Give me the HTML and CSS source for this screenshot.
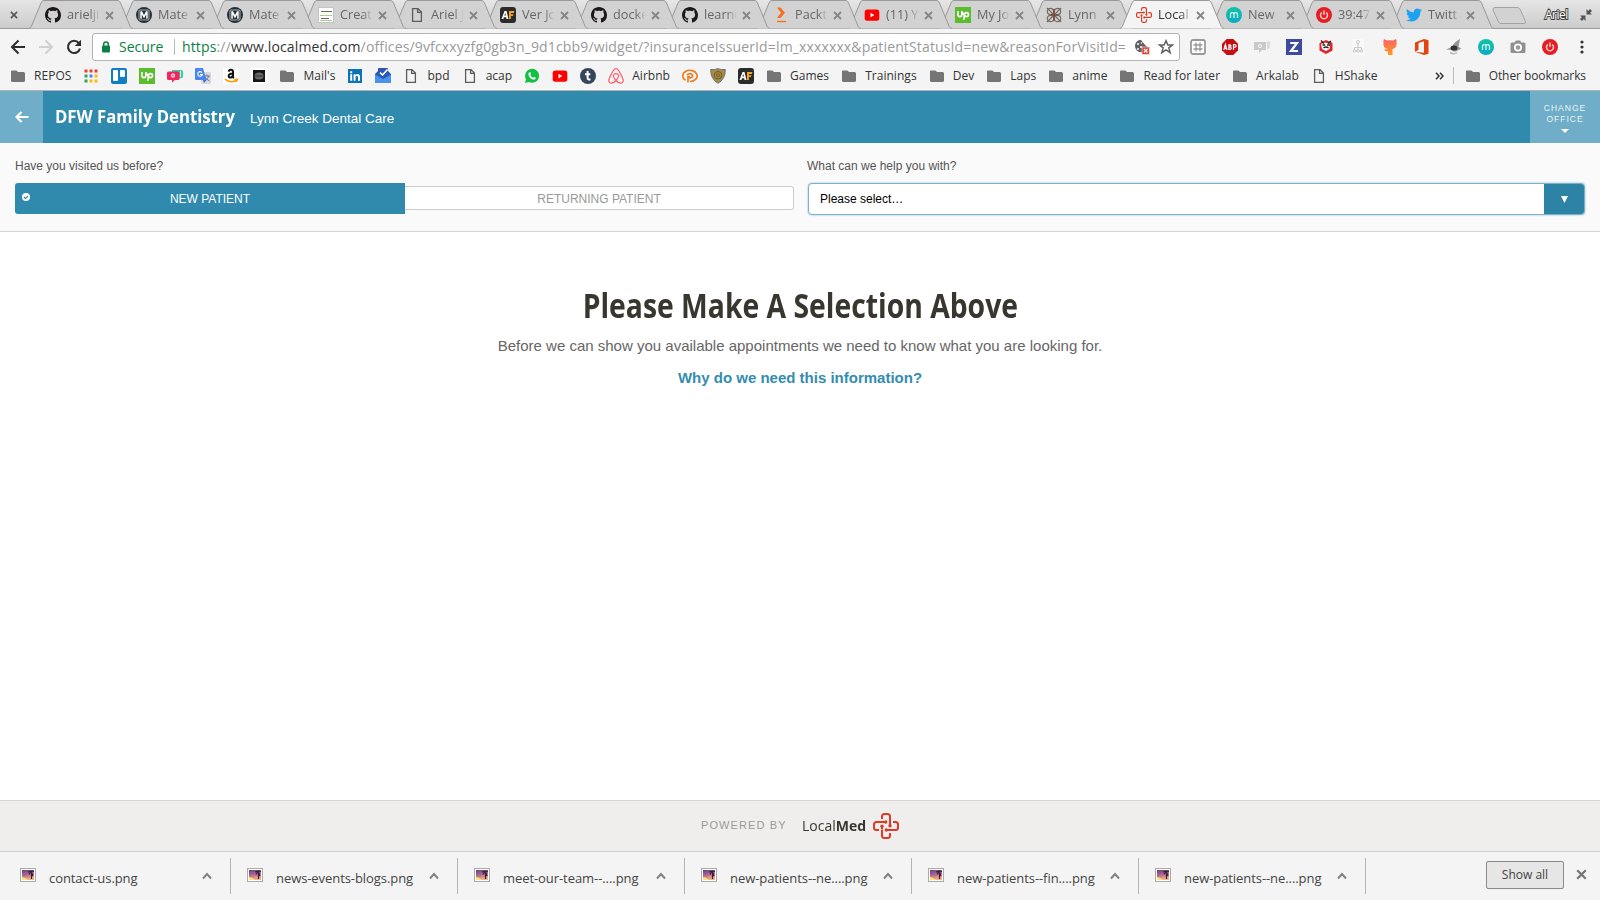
FILE: index.html
```html
<!DOCTYPE html>
<html lang="en">
<head>
<meta charset="utf-8">
<title>LocalMed</title>
<link rel="stylesheet" href="styles.css">
</head>
<body>
<svg class="defs" width="0" height="0">
  <defs>
    <linearGradient id="sunset" x1="0" y1="0" x2="0.3" y2="1"><stop offset="0" stop-color="#62407d"/><stop offset=".55" stop-color="#b06a94"/><stop offset="1" stop-color="#f3b183"/></linearGradient>
    <linearGradient id="teal" x1="0" y1="0" x2="0" y2="1"><stop offset="0" stop-color="#12c4a4"/><stop offset="1" stop-color="#0fa8c8"/></linearGradient>
    <linearGradient id="warm" x1="0" y1="0" x2="0" y2="1"><stop offset="0" stop-color="#f9646a"/><stop offset="1" stop-color="#fc9a1c"/></linearGradient>
  </defs>
  <symbol id="tab" viewBox="0 0 104 29"><path d="M0 28.5C1.500 28 2 27 2.500 26L12 3C13 1 13.500.5 15 .5H88C90 .5 90.500 1 91.500 3L101 26C101.500 27 102 28 104 28.500"/></symbol>
  <symbol id="x" viewBox="0 0 9 9"><path d="M1 1L8 8M8 1L1 8" stroke="currentColor" stroke-width="1.800" fill="none"/></symbol>
  <symbol id="github" viewBox="0 0 16 16"><path fill="#1b1817" d="M8 0C3.580 0 0 3.580 0 8c0 3.540 2.290 6.530 5.470 7.590.4.070.55-.17.55-.38 0-.19-.01-.82-.01-1.490-2.010.37-2.530-.49-2.690-.94-.09-.23-.48-.94-.82-1.130-.28-.15-.68-.52-.01-.53.63-.01 1.080.58 1.230.82.72 1.210 1.870.87 2.330.66.070-.52.28-.87.51-1.070-1.780-.2-3.640-.89-3.640-3.950 0-.87.31-1.590.82-2.150-.08-.2-.36-1.020.080-2.120 0 0 .67-.21 2.200.82.64-.18 1.320-.27 2-.27s1.360.090 2 .27c1.530-1.040 2.200-.82 2.200-.82.44 1.100.16 1.920.080 2.120.51.56.82 1.270.82 2.150 0 3.070-1.870 3.750-3.650 3.950.29.25.54.73.54 1.480 0 1.070-.01 1.930-.01 2.200 0 .21.15.46.55.38A8.010 8.010 0 0 0 16 8c0-4.420-3.580-8-8-8z"/></symbol>
  <symbol id="mate" viewBox="0 0 16 16"><circle cx="8" cy="8" r="8" fill="#232e37"/><rect x="3" y="3" width="10" height="10" rx="1" fill="none" stroke="#aab0b5" stroke-width="1"/><path d="M4.300 4.300H6L8 8L10 4.300H11.700V11.700H10.200V7.500L8 11.500L5.800 7.500V11.700H4.300Z" fill="#fff"/></symbol>
  <symbol id="lines" viewBox="0 0 16 16"><rect x=".5" y=".5" width="15" height="15" fill="#fff" stroke="#c4c4c4"/><path d="M3 4.500H14M3 11.500H11" stroke="#666" stroke-width="1"/><path d="M2 8.500H14M2 13.500H14" stroke="#a9cf8c"/></symbol>
  <symbol id="page" viewBox="0 0 16 16"><path d="M3.600 1.600H9L12.400 5V14.400H3.600ZM8.600 1.600V5.400H12.400" fill="none" stroke="#5c5c5c" stroke-width="1.300"/></symbol>
  <symbol id="af" viewBox="0 0 16 16"><rect width="16" height="16" rx="3" fill="#2b2b2b"/><path d="M1.500 12L4.500 4H6.500L8.500 12H6.600L6.200 10.300H3.900L3.400 12ZM4.400 8.600H5.900L5.300 6Z" fill="#fff"/><path d="M9 12V4H14.500L13.800 6H11L10.900 7.300H13.500L12.900 9H10.900V12Z" fill="#f7a41d"/></symbol>
  <symbol id="packt" viewBox="0 0 16 16"><path d="M4 .5H7.500L12 5.700L7.500 11H4L8 5.700Z" fill="#f37021"/><path d="M4 14.500H13" stroke="#f37021" stroke-width="1.400"/></symbol>
  <symbol id="yt" viewBox="0 0 16 16"><rect x=".7" y="2.500" width="14.600" height="11.200" rx="2.500" fill="#f00"/><path d="M6.500 5.700L10.300 8.100L6.500 10.500Z" fill="#fff"/></symbol>
  <symbol id="up" viewBox="0 0 16 16"><rect width="16" height="16" fill="#5bbc2e"/><path d="M3 4V7.700A1.900 1.900 0 0 0 6.800 7.700V4M8.700 12.800L9.500 7.500A2 2 0 1 1 11.400 9.600Q10 9.600 7 5" fill="none" stroke="#fff" stroke-width="1.600"/></symbol>
  <symbol id="knot" viewBox="0 0 16 16"><g fill="none" stroke="#756a63" stroke-width="1.200"><circle cx="4.500" cy="4.500" r="3.200"/><circle cx="11.500" cy="4.500" r="3.200"/><circle cx="4.500" cy="11.500" r="3.200"/><circle cx="11.500" cy="11.500" r="3.200"/><path d="M1 1L15 15M15 1L1 15"/></g><path d="M8 2V14M5 8H11" stroke="#7d4a3d" stroke-width="1.500"/></symbol>
  <symbol id="cross" viewBox="0 0 26 26"><g fill="none" stroke="#d93d27" stroke-width="2"><path d="M9 13V16.500M9 17V22.500Q9 25 11.500 25H14.500Q17 25 17 22.500V20"/><path d="M13 17H22.500Q25 17 25 14.500V11.500Q25 9 22.500 9H20"/><path d="M17 13V3.500Q17 1 14.500 1H11.500Q9 1 9 3.500V6"/><path d="M13 9H3.500Q1 9 1 11.500V14.500Q1 17 3.500 17H6"/></g><g fill="#d93d27"><circle cx="9" cy="13.300" r="1.700"/><circle cx="13.300" cy="17" r="1.700"/><circle cx="17" cy="12.700" r="1.700"/><circle cx="12.700" cy="9" r="1.700"/></g></symbol>
  <symbol id="m" viewBox="0 0 16 16"><circle cx="8" cy="8" r="8" fill="url(#teal)"/><path d="M4.500 11V7.300A1.750 1.750 0 0 1 8 7.300V11M8 7.300A1.750 1.750 0 0 1 11.500 7.300V11" fill="none" stroke="#d9fff5" stroke-width="1.200"/></symbol>
  <symbol id="power" viewBox="0 0 16 16"><circle cx="8" cy="8" r="8" fill="#e51e25"/><path d="M5.800 5.500A3.500 3.500 0 1 0 10.200 5.500M8 3.500V8" fill="none" stroke="#fbd5d5" stroke-width="1.400"/></symbol>
  <symbol id="bird" viewBox="0 0 24 24"><path fill="#1da1f2" d="M23.950 4.570a10 10 0 0 1-2.820.77 4.960 4.960 0 0 0 2.160-2.720c-.95.550-2 .95-3.130 1.180a4.920 4.920 0 0 0-8.380 4.480C7.690 8.090 4.070 6.130 1.640 3.160a4.820 4.820 0 0 0-.67 2.480c0 1.710.87 3.210 2.190 4.100a4.900 4.900 0 0 1-2.230-.62v.060a4.920 4.920 0 0 0 3.950 4.830 5 5 0 0 1-2.210.080 4.940 4.940 0 0 0 4.600 3.420A9.870 9.870 0 0 1 0 19.540a14 14 0 0 0 7.550 2.210c9.050 0 14-7.500 14-13.980 0-.21 0-.42-.02-.63a9.940 9.940 0 0 0 2.460-2.550z"/></symbol>
  <symbol id="folder" viewBox="0 0 16 16"><path fill="#757575" d="M2 2.500H6.500L8 4H13.500Q15 4 15 5.500V12.500Q15 14 13.500 14H2.500Q1 14 1 12.500V3.500Q1 2.500 2 2.500Z"/></symbol>
  <symbol id="apps" viewBox="0 0 16 16"><path d="M1.500 3H14.500" stroke="#ea4335" stroke-width="3" stroke-dasharray="3 2"/><path d="M1.500 8H4.500" stroke="#34a05a" stroke-width="3"/><path d="M6.500 8H9.500" stroke="#4285f4" stroke-width="3"/><path d="M11.500 8H14.500" stroke="#fbbc05" stroke-width="3"/><path d="M1.500 13H4.500" stroke="#34a05a" stroke-width="3"/><path d="M6.500 13H14.500" stroke="#fbbc05" stroke-width="3" stroke-dasharray="3 2"/></symbol>
  <symbol id="trello" viewBox="0 0 16 16"><rect width="16" height="16" rx="2" fill="#0f7ec4"/><rect x="2" y="2" width="5" height="11" rx="1" fill="#fff"/><rect x="9" y="2" width="5" height="7" rx="1" fill="#fff"/></symbol>
  <symbol id="chat" viewBox="0 0 16 16"><path d="M5 2H14.500Q16 2 16 3.500V9.500L13 10.500H5Z" fill="#3fd0a0"/><rect x="13" y="3" width="1" height="6" fill="#fff" opacity=".7"/><path d="M1.500 3.500H11Q12.500 3.500 12.500 5V10.500Q12.500 12 11 12H8L5 14.500V12H1.500Q0 12 0 10.500V5Q0 3.500 1.500 3.500Z" fill="#f5245f"/><circle cx="6" cy="7.600" r="1.500" fill="none" stroke="#fff" stroke-width="1.100"/></symbol>
  <symbol id="translate" viewBox="0 0 16 16"><rect x="6" y="4" width="10" height="12" rx="1" fill="#d7d9dc"/><path d="M9 8H15M12 6.500V8M14 8Q13 11 9.500 13M10 9Q12 12 14.500 13" stroke="#6b7f94" fill="none"/><path d="M1 0H8L11.500 12H1Q0 12 0 11V1Q0 0 1 0Z" fill="#4a86ee"/><path d="M7 4.700A2.300 2.300 0 1 0 7.300 6.500H5" fill="none" stroke="#fff" stroke-width="1.100"/><path d="M8 12H11.500L9 15Z" fill="#3767d6"/></symbol>
  <symbol id="amazon" viewBox="0 0 16 16"><rect width="16" height="16" fill="#fff"/><path d="M5.500 3.600Q6.200 1.700 8 1.800Q10 1.900 10 4V8.500Q10 9.500 11 10M10 5.500Q5.600 5.400 5.700 8Q6 10 8 9.500Q9.800 8.800 10 6.500" fill="none" stroke="#111" stroke-width="2"/><path d="M1.800 11.200Q7.500 15.500 13 12.500M11.500 11.500L14.300 11.300L13.300 14" fill="none" stroke="#f90" stroke-width="1.500"/></symbol>
  <symbol id="dark" viewBox="0 0 16 16"><rect width="16" height="16" fill="#fdfdfd"/><rect x="2" y="2" width="12" height="12" fill="#151515"/><ellipse cx="8" cy="8" rx="4.500" ry="3.500" fill="#666"/><path d="M4 8H12" stroke="#333" stroke-width="1"/></symbol>
  <symbol id="linkedin" viewBox="0 0 16 16"><rect x="1" y="1" width="14" height="14" fill="#0b74b4"/><path d="M3.200 6.200H5.200V12.800H3.200ZM3.200 3.200H5.200V5.200H3.200ZM6.600 6.200H8.500V7.100Q10 5.600 11.800 6.300Q13 7 13 9V12.800H11V9.300Q11 7.800 9.900 7.800Q8.600 7.800 8.600 9.300V12.800H6.600Z" fill="#fff"/></symbol>
  <symbol id="inbox" viewBox="0 0 16 16"><path d="M0 6L3 3V1Q3 0 4 0H12Q13 0 13 1V3L16 6V14Q16 15 15 15H1Q0 15 0 14Z" fill="#2a56b5"/><path d="M5 4.500L7.500 7L12.500 1.500" fill="none" stroke="#fff" stroke-width="1.700"/><path d="M0 6.500L8 11L16 6.500V14Q16 15 15 15H1Q0 15 0 14Z" fill="#4b92ef"/></symbol>
  <symbol id="whatsapp" viewBox="0 0 16 16"><path d="M1 15L2 11.300A7 7 0 1 1 4.800 14Z" fill="#12c143"/><path d="M5 4.500L6.300 4.300L7 6.200L6.300 7Q7.200 9 9.200 9.700L10 8.900L11.800 9.800Q11.700 11.500 10 11.700Q6 11.500 4.500 7Q4.200 5.500 5 4.500Z" fill="#fff"/></symbol>
  <symbol id="tumblr" viewBox="0 0 16 16"><circle cx="8" cy="8" r="8" fill="#35465c"/><path d="M7.600 3V10.200Q7.700 12 10.500 11.300M5 6.200H10.300" fill="none" stroke="#fff" stroke-width="2"/></symbol>
  <symbol id="airbnb" viewBox="0 0 16 16"><path d="M8 12.500Q5 9 5.500 7.500Q6 5.700 8 5.700Q10 5.700 10.500 7.500Q11 9 8 12.500Q5 15.800 2.500 15Q.2 14 .9 11.500Q2.500 7 5.700 2Q6.500.6 8 .6Q9.500.6 10.300 2Q13.500 7 15.100 11.500Q15.800 14 13.500 15Q11 15.800 8 12.500Z" fill="none" stroke="#ff5a6a" stroke-width="1.200"/></symbol>
  <symbol id="orangep" viewBox="0 0 16 16"><path d="M3.500 12.300A7.200 5.600 0 1 1 8 13.500M6 14.500V8M5 7Q8 4.500 10 6.500Q11.500 9 8.500 10Q7 10 7.500 8" fill="none" stroke="#f07d20" stroke-width="1.700"/></symbol>
  <symbol id="shield" viewBox="0 0 16 16"><path d="M.7 1.500Q4.500 2 8 .7Q11.500 2 15.300 1.500Q15.500 11 8 15.300Q.5 11 .7 1.500Z" fill="#b08a3c" stroke="#61737c"/><circle cx="8" cy="7.300" r="3.800" fill="none" stroke="#665a36"/><circle cx="8" cy="7.300" r="1.500" fill="none" stroke="#665a36"/></symbol>
  <symbol id="hash" viewBox="0 0 16 16"><rect x="1" y="1" width="14" height="14" rx="2" fill="#fff" stroke="#999" stroke-width="1.800"/><path d="M6 3.500V12.500M10 3.500V12.500M3.500 6H12.500M3.500 10H12.500" stroke="#999" stroke-width="1.300"/></symbol>
  <symbol id="abp" viewBox="0 0 16 16"><path d="M4.700 0H11.300L16 4.700V11.300L11.300 16H4.700L0 11.300V4.700Z" fill="#c70d12"/><path d="M1.800 11L3.400 5.500L5 11M2.300 9.300H4.500M6.900 5.500V10.400H8Q9.400 10.200 9.200 9Q9 8 7 8Q9 8 8.900 6.700Q8.700 5.500 6.900 5.700M11.500 11V5.700H12.700Q14.300 6 14.200 7.200Q14 8.500 11.500 8.500" fill="none" stroke="#fff" stroke-width="1.200"/></symbol>
  <symbol id="greychat" viewBox="0 0 16 16"><path d="M13 2.500H16V9L13 10" fill="#dcdcdc"/><path d="M0 3H12V11H8L5 14V11H0Z" fill="#c9c9c9"/><circle cx="6" cy="7" r="1.500" fill="none" stroke="#f4f4f4" stroke-width="1.100"/></symbol>
  <symbol id="z" viewBox="0 0 16 16"><rect width="16" height="16" fill="#3d4a9e"/><path d="M4.200 4H11L5 12H12" fill="none" stroke="#fff" stroke-width="2.200"/></symbol>
  <symbol id="redface" viewBox="0 0 16 16"><path d="M8 1L14.500 4V11.500L8 15L1.500 11.500V4Z" fill="#df252b"/><path d="M3 5L7 3.500L12 5L11.500 10L8 12L4 10Z" fill="#fff"/><path d="M3 1.500L6 4.500M13 2L10 4.500M4.500 6H7.300M9 6H12M5.500 9Q8 7 10.500 9" stroke="#222" stroke-width="1.400" fill="none"/></symbol>
  <symbol id="tree" viewBox="0 0 16 16"><rect x="2.500" width="11.500" height="16" fill="#fafafa"/><path d="M8 4.500V12M4.500 11.500V8.500H11.500V11.500" fill="none" stroke="#ccc"/><g fill="none" stroke="#c9c9c9"><circle cx="8" cy="3" r="1.500"/><circle cx="4.500" cy="12" r="1.300"/><circle cx="8" cy="12" r="1.300"/><circle cx="11.500" cy="12" r="1.300"/></g></symbol>
  <symbol id="octocat" viewBox="0 0 16 16"><path d="M2 0L5 1.500Q8 .8 11 1.500L14 0Q15 2 14.500 4Q15.300 9 10.500 10V16H6V12.500Q3 13 2 10.500Q3.500 10 5.700 10Q.7 9 1.500 4Q1 2 2 0Z" fill="url(#warm)"/></symbol>
  <symbol id="office" viewBox="0 0 16 16"><path d="M1 3.500L10 0L14.500 1.200V14.800L10 16L1 12.800L10 13.700V2.300L4.500 4V11L1 12.800Z" fill="#e2430f"/></symbol>
  <symbol id="gull" viewBox="0 0 16 16"><path d="M14 0Q8 3 6 8L0 10.500L5.500 11Q8 14 12.500 11L15.500 9.500L12.500 8Z" fill="#969696"/><ellipse cx="8" cy="9" rx="3.500" ry="2.500" fill="#333"/><path d="M4 13.500Q8 16 11 13.500" stroke="#bbb" stroke-width="1.500" fill="none"/></symbol>
  <symbol id="camera" viewBox="0 0 16 16"><path d="M2 3.500H4.500L6 1.500H10L11.500 3.500H14Q15.500 3.500 15.500 5V12.500Q15.500 14 14 14H2Q.5 14 .5 12.500V5Q.5 3.500 2 3.500Z" fill="#8f8f8f"/><circle cx="8" cy="8.500" r="3.200" fill="#999" stroke="#fff" stroke-width="1.700"/></symbol>
  <symbol id="picture" viewBox="0 0 16 14"><rect x=".5" y=".5" width="15" height="13" fill="#fff" stroke="#aaa"/><rect x="2" y="2" width="12" height="10" fill="url(#sunset)"/><path d="M2 9Q5 9 8 12H2Z" fill="#ffe27a"/><path d="M8 4L11 3L14 3.500M11 3L9 6.500M11 3L13 8M11.500 3V11" stroke="#35203c" stroke-width="1.200" fill="none"/></symbol>
  <symbol id="chev" viewBox="0 0 10 8"><path d="M1 6.500L5 2L9 6.500" fill="none" stroke="#808080" stroke-width="1.900"/></symbol>
</svg>

<header class="browser">
  <nav class="tabs">
    <span class="sliver"><svg class="close"><use href="#x"/></svg></span>
    <div class="tab"><svg class="shape"><use href="#tab"/></svg><svg class="ico"><use href="#github"/></svg><span>arielji</span><svg class="close"><use href="#x"/></svg></div>
    <div class="tab"><svg class="shape"><use href="#tab"/></svg><svg class="ico"><use href="#mate"/></svg><span>Mate</span><svg class="close"><use href="#x"/></svg></div>
    <div class="tab"><svg class="shape"><use href="#tab"/></svg><svg class="ico"><use href="#mate"/></svg><span>Mate</span><svg class="close"><use href="#x"/></svg></div>
    <div class="tab"><svg class="shape"><use href="#tab"/></svg><svg class="ico"><use href="#lines"/></svg><span>Creat</span><svg class="close"><use href="#x"/></svg></div>
    <div class="tab"><svg class="shape"><use href="#tab"/></svg><svg class="ico"><use href="#page"/></svg><span>Ariel J</span><svg class="close"><use href="#x"/></svg></div>
    <div class="tab"><svg class="shape"><use href="#tab"/></svg><svg class="ico"><use href="#af"/></svg><span>Ver Jo</span><svg class="close"><use href="#x"/></svg></div>
    <div class="tab"><svg class="shape"><use href="#tab"/></svg><svg class="ico"><use href="#github"/></svg><span>docke</span><svg class="close"><use href="#x"/></svg></div>
    <div class="tab"><svg class="shape"><use href="#tab"/></svg><svg class="ico"><use href="#github"/></svg><span>learni</span><svg class="close"><use href="#x"/></svg></div>
    <div class="tab"><svg class="shape"><use href="#tab"/></svg><svg class="ico"><use href="#packt"/></svg><span>Packt</span><svg class="close"><use href="#x"/></svg></div>
    <div class="tab"><svg class="shape"><use href="#tab"/></svg><svg class="ico"><use href="#yt"/></svg><span>(11) Y</span><svg class="close"><use href="#x"/></svg></div>
    <div class="tab"><svg class="shape"><use href="#tab"/></svg><svg class="ico"><use href="#up"/></svg><span>My Jo</span><svg class="close"><use href="#x"/></svg></div>
    <div class="tab narrow"><svg class="shape"><use href="#tab"/></svg><svg class="ico"><use href="#knot"/></svg><span>Lynn</span><svg class="close"><use href="#x"/></svg></div>
    <div class="tab narrow active"><svg class="shape"><use href="#tab"/></svg><svg class="ico"><use href="#cross"/></svg><span>Local</span><svg class="close"><use href="#x"/></svg></div>
    <div class="tab narrow"><svg class="shape"><use href="#tab"/></svg><svg class="ico"><use href="#m"/></svg><span>New</span><svg class="close"><use href="#x"/></svg></div>
    <div class="tab narrow"><svg class="shape"><use href="#tab"/></svg><svg class="ico"><use href="#power"/></svg><span>39:47</span><svg class="close"><use href="#x"/></svg></div>
    <div class="tab narrow"><svg class="shape"><use href="#tab"/></svg><svg class="ico"><use href="#bird"/></svg><span>Twitt</span><svg class="close"><use href="#x"/></svg></div>
    <svg class="newtab" viewBox="0 0 35 17"><path d="M3 .5H25Q27 .5 28 2L33.500 14.500Q34 16.500 32 16.500H9Q7.500 16.500 6.500 15L1 3Q.5.5 3 .5Z" fill="#d2d2d2" stroke="#a3a3a3"/></svg>
    <span class="profile">Ariel</span>
    <svg class="restore" viewBox="0 0 12 12"><path d="M6.500 0L8.200 1.900L10 0L12 2L10.100 3.800L12 5.500H6.500ZM5.500 12L3.800 10.100L2 12L0 10L1.900 8.200L0 6.500H5.500Z" fill="#555"/></svg>
  </nav>

  <div class="toolbar">
    <svg class="nav back" viewBox="0 0 16 16"><path d="M8.500 1.500L2 8L8.500 14.500M2 8H15" fill="none" stroke="#2d2d2d" stroke-width="2"/></svg>
    <svg class="nav" viewBox="0 0 16 16"><path d="M7.500 1.500L14 8L7.500 14.500M14 8H1" fill="none" stroke="#d0d0d0" stroke-width="2"/></svg>
    <svg class="nav" viewBox="0 0 16 16"><path d="M12.800 4A6.100 6.100 0 1 0 14 9.500" fill="none" stroke="#2d2d2d" stroke-width="2.100"/><path d="M15 .8V7H8.800Z" fill="#2d2d2d"/></svg>
    <div class="omnibox">
      <svg class="lock" viewBox="0 0 10 12"><path d="M2.700 5V3.200A2.300 2.300 0 0 1 7.300 3.200V5" fill="none" stroke="#0b8043" stroke-width="1.500"/><rect x="1" y="4.500" width="8" height="7" rx="1" fill="#0b8043"/></svg>
      <span class="secure">Secure</span>
      <span class="url"><i class="scheme">https</i>://<b>www.localmed.com</b>/offices/9vfcxxyzfg0gb3n_9d1cbb9/widget/?insuranceIssuerId=lm_xxxxxxx&amp;patientStatusId=new&amp;reasonForVisitId=</span>
      <svg class="cookie" viewBox="0 0 16 16"><path d="M7 .7A6.300 6.300 0 1 0 13.500 8L11.500 6.500L10 4.500L8.500 3Z" fill="#616161"/><g fill="#fff"><circle cx="4" cy="5" r="1"/><circle cx="7" cy="8" r="1"/><circle cx="4" cy="10" r="1"/><circle cx="7.500" cy="4" r=".8"/></g><rect x="8" y="8" width="7.500" height="7.500" fill="#db4437" stroke="#fff" stroke-width=".5"/><path d="M10 10L13.500 13.500M13.500 10L10 13.500" stroke="#fff" stroke-width="1.100"/></svg>
      <svg class="star" viewBox="0 0 16 16"><path d="M8 1.700L9.900 6H14.500L10.800 8.900L12.200 13.600L8 10.800L3.800 13.600L5.200 8.900L1.500 6H6.100Z" fill="none" stroke="#5f5f5f" stroke-width="1.500"/></svg>
    </div>
    <div class="exts">
      <svg><use href="#hash"/></svg><svg><use href="#abp"/></svg><svg><use href="#greychat"/></svg><svg><use href="#z"/></svg><svg><use href="#redface"/></svg><svg><use href="#tree"/></svg><svg><use href="#octocat"/></svg><svg><use href="#office"/></svg><svg><use href="#gull"/></svg><svg><use href="#m"/></svg><svg><use href="#camera"/></svg><svg><use href="#power"/></svg><svg viewBox="0 0 16 16"><g fill="#333"><circle cx="8" cy="3" r="1.600"/><circle cx="8" cy="8" r="1.600"/><circle cx="8" cy="13" r="1.600"/></g></svg>
    </div>
  </div>

  <div class="bookmarks">
    <a><svg><use href="#folder"/></svg>REPOS</a>
    <a><svg><use href="#apps"/></svg></a>
    <a><svg><use href="#trello"/></svg></a>
    <a><svg><use href="#up"/></svg></a>
    <a><svg><use href="#chat"/></svg></a>
    <a><svg><use href="#translate"/></svg></a>
    <a><svg><use href="#amazon"/></svg></a>
    <a><svg><use href="#dark"/></svg></a>
    <a><svg><use href="#folder"/></svg>Mail's</a>
    <a><svg><use href="#linkedin"/></svg></a>
    <a><svg><use href="#inbox"/></svg></a>
    <a><svg><use href="#page"/></svg>bpd</a>
    <a><svg><use href="#page"/></svg>acap</a>
    <a><svg><use href="#whatsapp"/></svg></a>
    <a><svg><use href="#yt"/></svg></a>
    <a><svg><use href="#tumblr"/></svg></a>
    <a><svg><use href="#airbnb"/></svg>Airbnb</a>
    <a><svg><use href="#orangep"/></svg></a>
    <a><svg><use href="#shield"/></svg></a>
    <a><svg><use href="#af"/></svg></a>
    <a><svg><use href="#folder"/></svg>Games</a>
    <a><svg><use href="#folder"/></svg>Trainings</a>
    <a><svg><use href="#folder"/></svg>Dev</a>
    <a><svg><use href="#folder"/></svg>Laps</a>
    <a><svg><use href="#folder"/></svg>anime</a>
    <a><svg><use href="#folder"/></svg>Read for later</a>
    <a><svg><use href="#folder"/></svg>Arkalab</a>
    <a><svg><use href="#page"/></svg>HShake</a>
    <svg class="more" viewBox="0 0 9 8"><path d="M1 .8L4 4L1 7.200M5 .8L8 4L5 7.200" fill="none" stroke="#333" stroke-width="1.500"/></svg>
    <a class="other"><svg><use href="#folder"/></svg>Other bookmarks</a>
  </div>
</header>

<div class="office-bar">
  <button class="goback"><svg viewBox="0 0 14 12"><path d="M6.500 1L1.500 6L6.500 11M1.500 6H13.500" fill="none" stroke="#fff" stroke-width="2.200"/></svg></button>
  <h1><span>DFW Family Dentistry</span></h1>
  <p>Lynn Creek Dental Care</p>
  <button class="change"><span>CHANGE</span><span>OFFICE</span><i></i></button>
</div>

<section class="filters">
  <div class="field">
    <label>Have you visited us before?</label>
    <div class="toggle">
      <div class="new"><svg viewBox="0 0 8 8"><circle cx="4" cy="4" r="4" fill="#fff"/><path d="M2 4L3.500 5.500L6 2.800" fill="none" stroke="#2f8aad" stroke-width="1.200"/></svg>NEW PATIENT</div>
      <div class="returning">RETURNING PATIENT</div>
    </div>
  </div>
  <div class="field">
    <label>What can we help you with?</label>
    <div class="select"><span>Please select…</span><em><svg viewBox="0 0 7 7"><path d="M0 0H7L3.500 7Z" fill="#fff"/></svg></em></div>
  </div>
</section>

<main>
  <h2><span>Please Make A Selection Above</span></h2>
  <p>Before we can show you available appointments we need to know what you are looking for.</p>
  <a>Why do we need this information?</a>
</main>

<footer class="powered">
  <span class="by">POWERED BY</span>
  <span class="brand"><span>Local<b>Med</b></span></span>
  <svg><use href="#cross"/></svg>
</footer>

<footer class="downloads">
  <div class="file"><svg class="pic"><use href="#picture"/></svg><span>contact-us.png</span><svg class="chev"><use href="#chev"/></svg></div>
  <div class="file"><svg class="pic"><use href="#picture"/></svg><span>news-events-blogs.png</span><svg class="chev"><use href="#chev"/></svg></div>
  <div class="file"><svg class="pic"><use href="#picture"/></svg><span>meet-our-team--....png</span><svg class="chev"><use href="#chev"/></svg></div>
  <div class="file"><svg class="pic"><use href="#picture"/></svg><span>new-patients--ne....png</span><svg class="chev"><use href="#chev"/></svg></div>
  <div class="file"><svg class="pic"><use href="#picture"/></svg><span>new-patients--fin....png</span><svg class="chev"><use href="#chev"/></svg></div>
  <div class="file"><svg class="pic"><use href="#picture"/></svg><span>new-patients--ne....png</span><svg class="chev"><use href="#chev"/></svg></div>
  <button class="showall">Show all</button>
  <svg class="shut"><use href="#x"/></svg>
</footer>
</body>
</html>
```
FILE: styles.css
```css
* { box-sizing: border-box; }
body {
  margin: 0;
  width: 1600px;
  height: 900px;
  overflow: hidden;
  display: flex;
  flex-direction: column;
  background: #fff;
  font-family: "Liberation Sans", Arial, sans-serif;
}
svg { display: block; flex: none; }
.defs { position: absolute; }
button { border: 0; padding: 0; margin: 0; font: inherit; }
i, em { font-style: normal; }

/* browser chrome */
.browser {
  height: 91px;
  flex: none;
  background: #f4f4f4;
  border-bottom: 1px solid #b3b3b3;
  font-family: "Open Sans", "Noto Sans", sans-serif;
}
.tabs {
  height: 29px;
  display: flex;
  align-items: center;
  background: linear-gradient(#e6e6e6, #cbcbcb);
  box-shadow: inset 0 -1px #9a9a9a;
  isolation: isolate;
}
.sliver { width: 29px; padding-left: 10px; flex: none; }
.close { width: 9px; height: 9px; color: #858585; }
.sliver .close { width: 8px; height: 8px; color: #555; }
.tab {
  position: relative;
  width: 104px;
  height: 29px;
  margin-right: -13px;
  padding-left: 16px;
  flex: none;
  display: flex;
  align-items: center;
  font-size: 12.700px;
  color: #666;
}
.tab.narrow { margin-right: -14px; }
.tab .shape {
  position: absolute;
  inset: 0;
  width: 104px;
  height: 29px;
  fill: #d2d2d2;
  stroke: #999;
  z-index: -1;
}
.tab:nth-child(2) { z-index: 17; }
.tab:nth-child(3) { z-index: 16; }
.tab:nth-child(4) { z-index: 15; }
.tab:nth-child(5) { z-index: 14; }
.tab:nth-child(6) { z-index: 13; }
.tab:nth-child(7) { z-index: 12; }
.tab:nth-child(8) { z-index: 11; }
.tab:nth-child(9) { z-index: 10; }
.tab:nth-child(10) { z-index: 9; }
.tab:nth-child(11) { z-index: 8; }
.tab:nth-child(12) { z-index: 7; }
.tab:nth-child(13) { z-index: 6; }
.tab:nth-child(15) { z-index: 4; }
.tab:nth-child(16) { z-index: 3; }
.tab:nth-child(17) { z-index: 2; }
.tab.active { z-index: 20; color: #333; }
.tab.active .shape { fill: #f4f4f4; }
.tab .ico { width: 16px; height: 16px; margin-top: 1px; }
.tab span {
  width: 32px;
  margin: -1px 6px 0;
  overflow: hidden;
  white-space: nowrap;
  -webkit-mask-image: linear-gradient(90deg, #000 70%, rgba(0, 0, 0, .1));
  mask-image: linear-gradient(90deg, #000 70%, rgba(0, 0, 0, .1));
}
.tab .close { margin-top: 1px; }
.newtab { width: 35px; height: 17px; margin-left: 12px; margin-top: 2px; }
.profile {
  margin-left: 18px;
  width: 26px;
  font-size: 12px;
  letter-spacing: -.5px;
  color: #fff;
  -webkit-text-stroke: 2px #444;
  paint-order: stroke fill;
}
.restore { width: 12px; height: 12px; margin-left: 9px; }

.toolbar { height: 36px; display: flex; align-items: center; padding-left: 10px; }
.nav { width: 16px; height: 16px; margin-right: 12px; }
.omnibox {
  width: 1088px;
  height: 28px;
  margin-left: -2px;
  flex: none;
  display: flex;
  align-items: center;
  background: #fff;
  border: 1px solid #b4b4b4;
  border-radius: 3px;
  font-size: 14px;
}
.lock { width: 10px; height: 12px; margin: -1px 0 0 8px; }
.secure { width: 56px; margin-left: 8px; color: #0b8043; border-right: 1px solid #bbb; line-height: 16px; }
.url { width: 945px; margin: -2px 0 0 7px; color: #9a9a9a; white-space: nowrap; letter-spacing: .145px; }
.url b { font-weight: 400; color: #333; }
.scheme { color: #0b8043; }
.cookie { width: 16px; height: 16px; margin-left: 7px; }
.star { width: 16px; height: 16px; margin-left: 8px; }
.exts { display: flex; gap: 16px; margin-left: 10px; }
.exts svg { width: 16px; height: 16px; }

.bookmarks {
  height: 25px;
  padding-left: 10px;
  margin-top: -2px;
  display: flex;
  align-items: center;
  gap: 12px;
  font-size: 12px;
  letter-spacing: .035px;
  color: #333;
}
.bookmarks a { display: flex; align-items: center; gap: 8px; white-space: nowrap; }
.bookmarks svg { width: 16px; height: 16px; }
.bookmarks .more { width: 9px; height: 8px; margin-left: auto; }
.bookmarks .other { margin-right: 14px; padding-left: 11px; margin-left: -3px; border-left: 1px solid #bbb; letter-spacing: -.08px; }

/* office bar */
.office-bar { height: 52px; flex: none; display: flex; background: #2f8aad; color: #fff; }
.goback { width: 43px; background: #6fadc8; display: flex; align-items: center; justify-content: center; }
.goback svg { width: 14px; height: 12px; }
h1 { margin: 0 0 0 12px; width: 195px; font: 700 18px/51px "Open Sans", "Noto Sans", sans-serif; white-space: nowrap; }
h1 span { display: inline-block; transform: scaleX(.928); transform-origin: 0 50%; }
.office-bar p { margin: 0; font-size: 13.500px; line-height: 56px; }
.change {
  width: 70px;
  margin-left: auto;
  padding-top: 12px;
  display: flex;
  flex-direction: column;
  align-items: center;
  background: #6fadc8;
  color: #e9f5fa;
  font-size: 8.500px;
  line-height: 11px;
  letter-spacing: 1px;
}
.change i { width: 0; border: 4px solid transparent; border-top-color: #fff; border-bottom: 0; margin-top: 4px; }

/* filters */
.filters {
  height: 89px;
  flex: none;
  display: flex;
  gap: 13px;
  padding: 15px 15px 0;
  background: #fafafa;
  border-bottom: 1px solid #d5d5d5;
  font-size: 12px;
}
.field { width: 779px; flex: none; }
.field + .field { width: 778px; }
.filters label { display: block; line-height: 16px; color: #555; }
.toggle { display: flex; align-items: flex-start; margin-top: 9px; height: 31px; }
.new {
  position: relative;
  width: 390px;
  height: 31px;
  line-height: 32px;
  text-align: center;
  color: #fff;
  background: #2f8aad;
  border-radius: 3px 0 0 3px;
}
.new svg { position: absolute; left: 7px; top: 10px; width: 8px; height: 8px; }
.returning {
  width: 389px;
  height: 24px;
  margin-top: 3px;
  line-height: 24px;
  text-align: center;
  color: #999;
  background: #fff;
  border: 1px solid #ccc;
  border-left: 0;
  border-radius: 0 3px 3px 0;
}
.select {
  height: 32px;
  margin: 9px 0 0 1px;
  display: flex;
  overflow: hidden;
  background: #fff;
  border: 1px solid #7fb0c5;
  border-radius: 4px;
  box-shadow: 0 0 2px #7fb5cc;
  color: #000;
}
.select span { flex: 1; padding-left: 11px; line-height: 30px; }
.select em { width: 40px; background: #2c83a6; display: flex; align-items: center; justify-content: center; }
.select svg { width: 7px; height: 7px; }

main { flex: 1; display: flex; flex-direction: column; align-items: center; padding-top: 48px; color: #666; }
h2 { margin: 0; height: 50px; font: 700 34px/50px "Open Sans", "Noto Sans", sans-serif; color: #38362f; white-space: nowrap; }
h2 span { display: inline-block; transform: scaleX(.833); }
main p { margin: 6px 0 0; font-size: 15px; line-height: 20px; }
main a { margin-top: 12px; font-size: 15px; line-height: 20px; font-weight: 700; color: #338db0; }

.powered {
  height: 51px;
  flex: none;
  display: flex;
  align-items: center;
  padding-left: 701px;
  background: #f0eeec;
  border-top: 1px solid #d5d5d5;
}
.by { width: 101px; margin-top: -2px; font-size: 11px; letter-spacing: 1.100px; color: #999; }
.brand { width: 71px; margin-top: -3px; font: 15px/20px "Open Sans", sans-serif; color: #38362f; white-space: nowrap; }
.brand > span { display: inline-block; transform: scaleX(.935); transform-origin: 0 50%; }
.powered svg { width: 26px; height: 26px; }

.downloads {
  height: 49px;
  flex: none;
  display: flex;
  padding-top: 6px;
  background: #f4f4f4;
  border-top: 1px solid #d0d0d0;
  font: 13px "Open Sans", "Noto Sans", sans-serif;
  color: #444;
}
.file { width: 227px; height: 36px; flex: none; display: flex; padding-left: 16px; border-right: 1px solid #b4b4b4; }
.file:first-child { width: 231px; padding-left: 20px; }
.pic { width: 16px; height: 14px; margin-top: 10px; }
.file span { width: 152px; margin-left: 13px; line-height: 40px; white-space: nowrap; letter-spacing: -.07px; }
.chev { width: 10px; height: 8px; margin-top: 14px; margin-left: 1px; }
.showall {
  width: 78px;
  height: 28px;
  margin: 3px 0 0 120px;
  padding-bottom: 2px;
  background: #e6e6e6;
  border: 1px solid #8a8a8a;
  border-radius: 2px;
  color: #444;
  font-size: 12px;
}
.shut { width: 11px; height: 11px; margin: 11px 0 0 12px; color: #757575; }
```
